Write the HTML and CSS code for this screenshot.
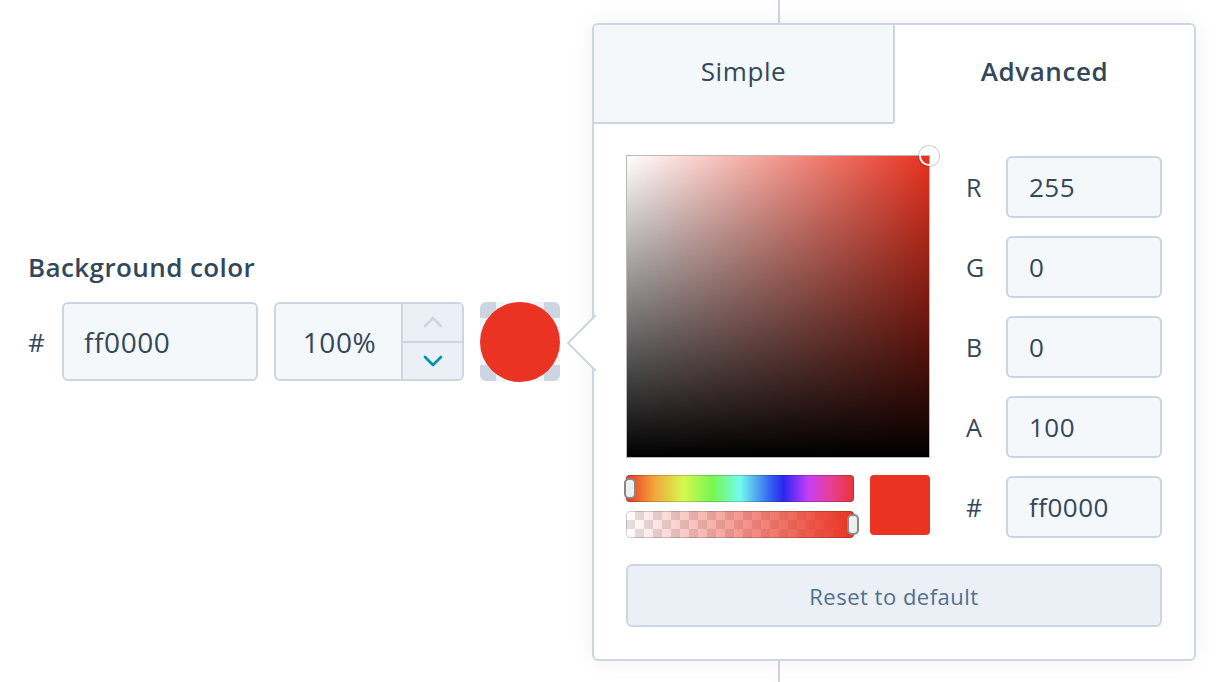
FILE: index.html
```html
<!doctype html>
<html>
  <head>
    <title>Background color</title>
    <link rel="stylesheet" href="styles.css">
  </head>
  <body>
    <div class="app">
      <div class="connector"></div>

      <div class="field">
        <label class="field-label">Background color</label>
        <div class="field-row">
          <span class="hash">#</span>
          <div class="input hex-input">ff0000</div>
          <div class="input percent-input">
            <span class="percent-value">100%</span>
            <div class="stepper">
              <button class="step step-up">
                <svg width="20" height="12" viewBox="0 0 20 12"><polyline points="2,10 10,2 18,10" fill="none" stroke="#cbd6e2" stroke-width="2.6" stroke-linecap="round" stroke-linejoin="round"/></svg>
              </button>
              <button class="step step-down">
                <svg width="20" height="12" viewBox="0 0 20 12"><polyline points="2,2 10,10 18,2" fill="none" stroke="#0091ae" stroke-width="2.6" stroke-linecap="round" stroke-linejoin="round"/></svg>
              </button>
            </div>
          </div>
          <div class="swatch">
            <div class="swatch-dot"></div>
          </div>
        </div>
      </div>

      <div class="popover">
        <svg class="popover-arrow" width="30" height="58" viewBox="0 0 30 58">
          <polygon points="30,1 2,29 30,57" fill="#fff"/>
          <polyline points="30,1 2,29 30,57" fill="none" stroke="#cbd6e2" stroke-width="2"/>
        </svg>
        <div class="tabs">
          <div class="tab">Simple</div>
          <div class="tab active">Advanced</div>
        </div>
        <div class="picker">
          <div class="picker-top">
            <div class="picker-left">
              <div class="saturation">
                <span class="sat-cursor"></span>
              </div>
              <div class="slider-row">
                <div class="sliders">
                  <div class="slider hue">
                    <span class="handle handle-start"></span>
                  </div>
                  <div class="slider alpha">
                    <span class="handle handle-end"></span>
                  </div>
                </div>
                <div class="preview"></div>
              </div>
            </div>
            <div class="channels">
              <div class="channel"><span class="channel-label">R</span><div class="input channel-input">255</div></div>
              <div class="channel"><span class="channel-label">G</span><div class="input channel-input">0</div></div>
              <div class="channel"><span class="channel-label">B</span><div class="input channel-input">0</div></div>
              <div class="channel"><span class="channel-label">A</span><div class="input channel-input">100</div></div>
              <div class="channel"><span class="channel-label">#</span><div class="input channel-input">ff0000</div></div>
            </div>
          </div>
          <button class="reset">Reset to default</button>
        </div>
      </div>
    </div>
  </body>
</html>
```

FILE: styles.css
```css
html, body {
  height: 100%;
  margin: 0;
}
body {
  background: #fff;
  color: #33475b;
  font-family: "Open Sans", Lato, sans-serif;
  overflow: hidden;
}
.app {
  position: relative;
  height: 100%;
}
.connector {
  position: absolute;
  left: 778px;
  top: 0;
  bottom: 0;
  width: 2px;
  background: #cbd6e2;
}

/* field */
.field {
  padding: 249px 0 0 28px;
}
.field-label {
  display: block;
  font-size: 26px;
  font-weight: 600;
  letter-spacing: .4px;
  margin-bottom: 17px;
}
.field-row {
  display: flex;
  align-items: center;
}
.hash {
  font-size: 26px;
  width: 34px;
}
.input {
  box-sizing: border-box;
  background: #f5f8fa;
  border: 2px solid #cbd6e2;
  border-radius: 6px;
  font-size: 28px;
  letter-spacing: .6px;
  display: flex;
  align-items: center;
}
.hex-input {
  width: 196px;
  height: 79px;
  padding-left: 20px;
}
.percent-input {
  width: 190px;
  height: 79px;
  margin-left: 16px;
  overflow: hidden;
}
.percent-value {
  flex: 1;
  text-align: center;
  padding-left: 2px;
}
.stepper {
  width: 59px;
  height: 100%;
  border-left: 2px solid #cbd6e2;
  display: flex;
  flex-direction: column;
}
.step {
  flex: 1;
  border: 0;
  background: #eaf0f6;
  padding: 0;
  display: flex;
  align-items: center;
  justify-content: center;
}
.step-up {
  border-bottom: 2px solid #cbd6e2;
}
.swatch {
  width: 80px;
  height: 79px;
  margin-left: 16px;
  border-radius: 6px;
  background:
    linear-gradient(90deg, #cbd6e2 16px, transparent 16px, transparent 64px, #cbd6e2 64px) top / 100% 16px no-repeat,
    linear-gradient(90deg, #cbd6e2 16px, transparent 16px, transparent 64px, #cbd6e2 64px) bottom / 100% 16px no-repeat,
    #f0f3f7;
  display: flex;
  align-items: center;
  justify-content: center;
}
.swatch-dot {
  width: 80px;
  height: 80px;
  border-radius: 50%;
  background: #ea3323;
}

/* popover */
.popover {
  position: absolute;
  left: 592px;
  top: 23px;
  width: 604px;
  height: 638px;
  box-sizing: border-box;
  background: #fff;
  border: 2px solid #cbd6e2;
  border-radius: 6px;
  box-shadow: 0 0 24px rgba(0, 0, 0, .06);
}
.popover-arrow {
  position: absolute;
  left: -28px;
  top: 289px;
}
.tabs {
  display: flex;
  height: 99px;
}
.tab {
  flex: 1;
  display: flex;
  align-items: center;
  justify-content: center;
  padding-bottom: 5px;
  font-size: 26px;
  letter-spacing: .6px;
  background: #f5f8fa;
  border-bottom: 2px solid #cbd6e2;
  border-top-left-radius: 4px;
}
.tab + .tab {
  border-left: 2px solid #cbd6e2;
}
.tab.active {
  background: #fff;
  border-bottom-color: transparent;
  font-weight: 600;
  border-radius: 0 4px 0 0;
}
.picker {
  padding: 31px 32px 0 32px;
}
.picker-top {
  display: flex;
  justify-content: space-between;
}
.saturation {
  position: relative;
  width: 304px;
  height: 303px;
  box-sizing: border-box;
  border: 1px solid #b9b9b9;
  background:
    linear-gradient(to top, #000, rgba(0, 0, 0, 0)),
    linear-gradient(to right, #fff, #e8321f);
}
.sat-cursor {
  position: absolute;
  right: -10px;
  top: -10px;
  width: 16px;
  height: 16px;
  border-radius: 50%;
  border: 2px solid #fff;
  box-shadow: 0 0 0 1px rgba(0, 0, 0, .2);
}
.slider-row {
  display: flex;
  margin-top: 17px;
  gap: 16px;
}
.sliders {
  display: flex;
  flex-direction: column;
  gap: 9px;
}
.slider {
  position: relative;
  width: 228px;
  height: 27px;
  box-sizing: border-box;
  border-radius: 4px;
  box-shadow: inset 0 0 0 1px rgba(0, 0, 0, .18);
}
.hue {
  background: linear-gradient(to right, #ea3323 0%, #f2a33a 12%, #d7f74f 25%, #75f74f 38%, #74fbf0 50%, #3465f0 63%, #2b27f0 69%, #c73ef5 80%, #e73f92 90%, #ea3336 100%);
}
.alpha {
  background:
    linear-gradient(to right, rgba(234, 51, 35, 0), #ea3323),
    repeating-conic-gradient(#e2e2e2 0 25%, #fff 0 50%) 0 0 / 18px 18px;
}
.handle {
  position: absolute;
  top: 3px;
  width: 12px;
  height: 21px;
  box-sizing: border-box;
  background: #eee;
  border: 2px solid #888;
  border-radius: 5px;
}
.handle-start {
  left: -2px;
}
.handle-end {
  right: -5px;
}
.preview {
  width: 60px;
  height: 60px;
  border-radius: 4px;
  background: #ea3323;
}
.channels {
  display: flex;
  flex-direction: column;
  gap: 18px;
  margin-top: 1px;
}
.channel {
  display: flex;
  align-items: center;
}
.channel-label {
  width: 40px;
  font-size: 25px;
}
.channel-input {
  width: 156px;
  height: 62px;
  padding-left: 21px;
  font-size: 26px;
  letter-spacing: .5px;
}
.reset {
  display: block;
  width: 100%;
  height: 63px;
  margin-top: 26px;
  background: #eaf0f6;
  border: 2px solid #cbd6e2;
  border-radius: 6px;
  color: #516f90;
  font-family: inherit;
  font-size: 22px;
  letter-spacing: .5px;
}
```
